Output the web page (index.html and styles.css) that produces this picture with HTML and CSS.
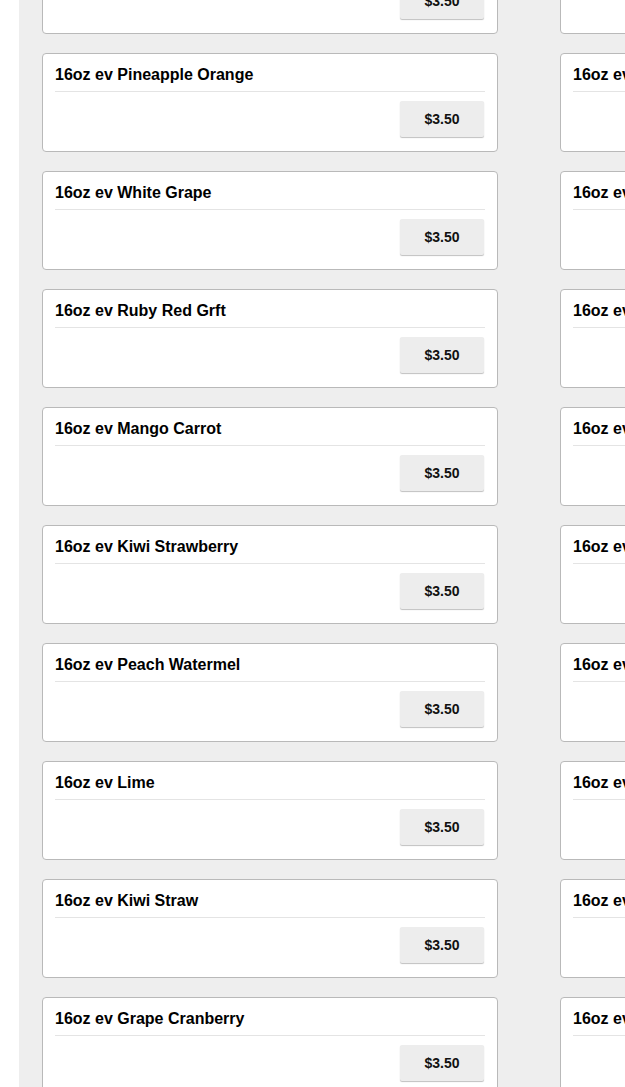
FILE: index.html
```html
<!DOCTYPE html>
<html>
<head>
<meta charset="utf-8">
<link rel="stylesheet" href="styles.css">
</head>
<body>
<div class="page">
  <div class="side"></div>
  <main class="main">
    <div class="grid">
      <div class="card"><div class="title">16oz ev Orange Mango</div><div class="actions"><button class="price">$3.50</button></div></div>
      <div class="card"><div class="title">16oz ev Orange Juice</div><div class="actions"><button class="price">$3.50</button></div></div>
      <div class="card"><div class="title">16oz ev Pineapple Orange</div><div class="actions"><button class="price">$3.50</button></div></div>
      <div class="card"><div class="title">16oz ev Apple Juice</div><div class="actions"><button class="price">$3.50</button></div></div>
      <div class="card"><div class="title">16oz ev White Grape</div><div class="actions"><button class="price">$3.50</button></div></div>
      <div class="card"><div class="title">16oz ev Fruit Punch</div><div class="actions"><button class="price">$3.50</button></div></div>
      <div class="card"><div class="title">16oz ev Ruby Red Grft</div><div class="actions"><button class="price">$3.50</button></div></div>
      <div class="card"><div class="title">16oz ev Lemonade</div><div class="actions"><button class="price">$3.50</button></div></div>
      <div class="card"><div class="title">16oz ev Mango Carrot</div><div class="actions"><button class="price">$3.50</button></div></div>
      <div class="card"><div class="title">16oz ev Cranberry</div><div class="actions"><button class="price">$3.50</button></div></div>
      <div class="card"><div class="title">16oz ev Kiwi Strawberry</div><div class="actions"><button class="price">$3.50</button></div></div>
      <div class="card"><div class="title">16oz ev Tropical</div><div class="actions"><button class="price">$3.50</button></div></div>
      <div class="card"><div class="title">16oz ev Peach Watermel</div><div class="actions"><button class="price">$3.50</button></div></div>
      <div class="card"><div class="title">16oz ev Pink Lemonade</div><div class="actions"><button class="price">$3.50</button></div></div>
      <div class="card"><div class="title">16oz ev Lime</div><div class="actions"><button class="price">$3.50</button></div></div>
      <div class="card"><div class="title">16oz ev Berry Blend</div><div class="actions"><button class="price">$3.50</button></div></div>
      <div class="card"><div class="title">16oz ev Kiwi Straw</div><div class="actions"><button class="price">$3.50</button></div></div>
      <div class="card"><div class="title">16oz ev Grapefruit</div><div class="actions"><button class="price">$3.50</button></div></div>
      <div class="card"><div class="title">16oz ev Grape Cranberry</div><div class="actions"><button class="price">$3.50</button></div></div>
      <div class="card"><div class="title">16oz ev Cherry Lime</div><div class="actions"><button class="price">$3.50</button></div></div>
    </div>
  </main>
</div>
</body>
</html>
```

FILE: styles.css
```css
html, body {
  margin: 0;
  padding: 0;
  background: #ffffff;
  overflow: hidden;
  height: 1087px;
}
body {
  font-family: "Liberation Sans", Arial, sans-serif;
  color: #000;
}
.page {
  display: flex;
  width: 1200px;
  height: 1087px;
}
.side {
  width: 19px;
  flex: none;
  background: #ffffff;
}
.main {
  flex: 1;
  background: #eeeeee;
  padding: 0 0 0 23px;
  overflow: hidden;
}
.grid {
  display: grid;
  grid-template-columns: 456px 456px;
  column-gap: 62px;
  row-gap: 19px;
  margin-top: -65px;
}
.card {
  background: #ffffff;
  border: 1px solid #b9b9b9;
  border-radius: 4px;
  padding: 12px 12px 13px;
  height: 99px;
  box-sizing: border-box;
}
.title {
  font-size: 16px;
  font-weight: bold;
  line-height: 17px;
  padding-bottom: 8px;
  border-bottom: 1px solid #e4e4e4;
}
.actions {
  display: flex;
  justify-content: flex-end;
  margin-top: 9px;
  padding-right: 1px;
}
.price {
  width: 84px;
  height: 36px;
  border: none;
  border-radius: 2px;
  background: #ededed;
  box-shadow: 0 1px 1px rgba(0,0,0,0.25);
  font-family: "Liberation Sans", Arial, sans-serif;
  font-size: 14px;
  font-weight: bold;
  color: #111;
  padding: 0;
}
```
